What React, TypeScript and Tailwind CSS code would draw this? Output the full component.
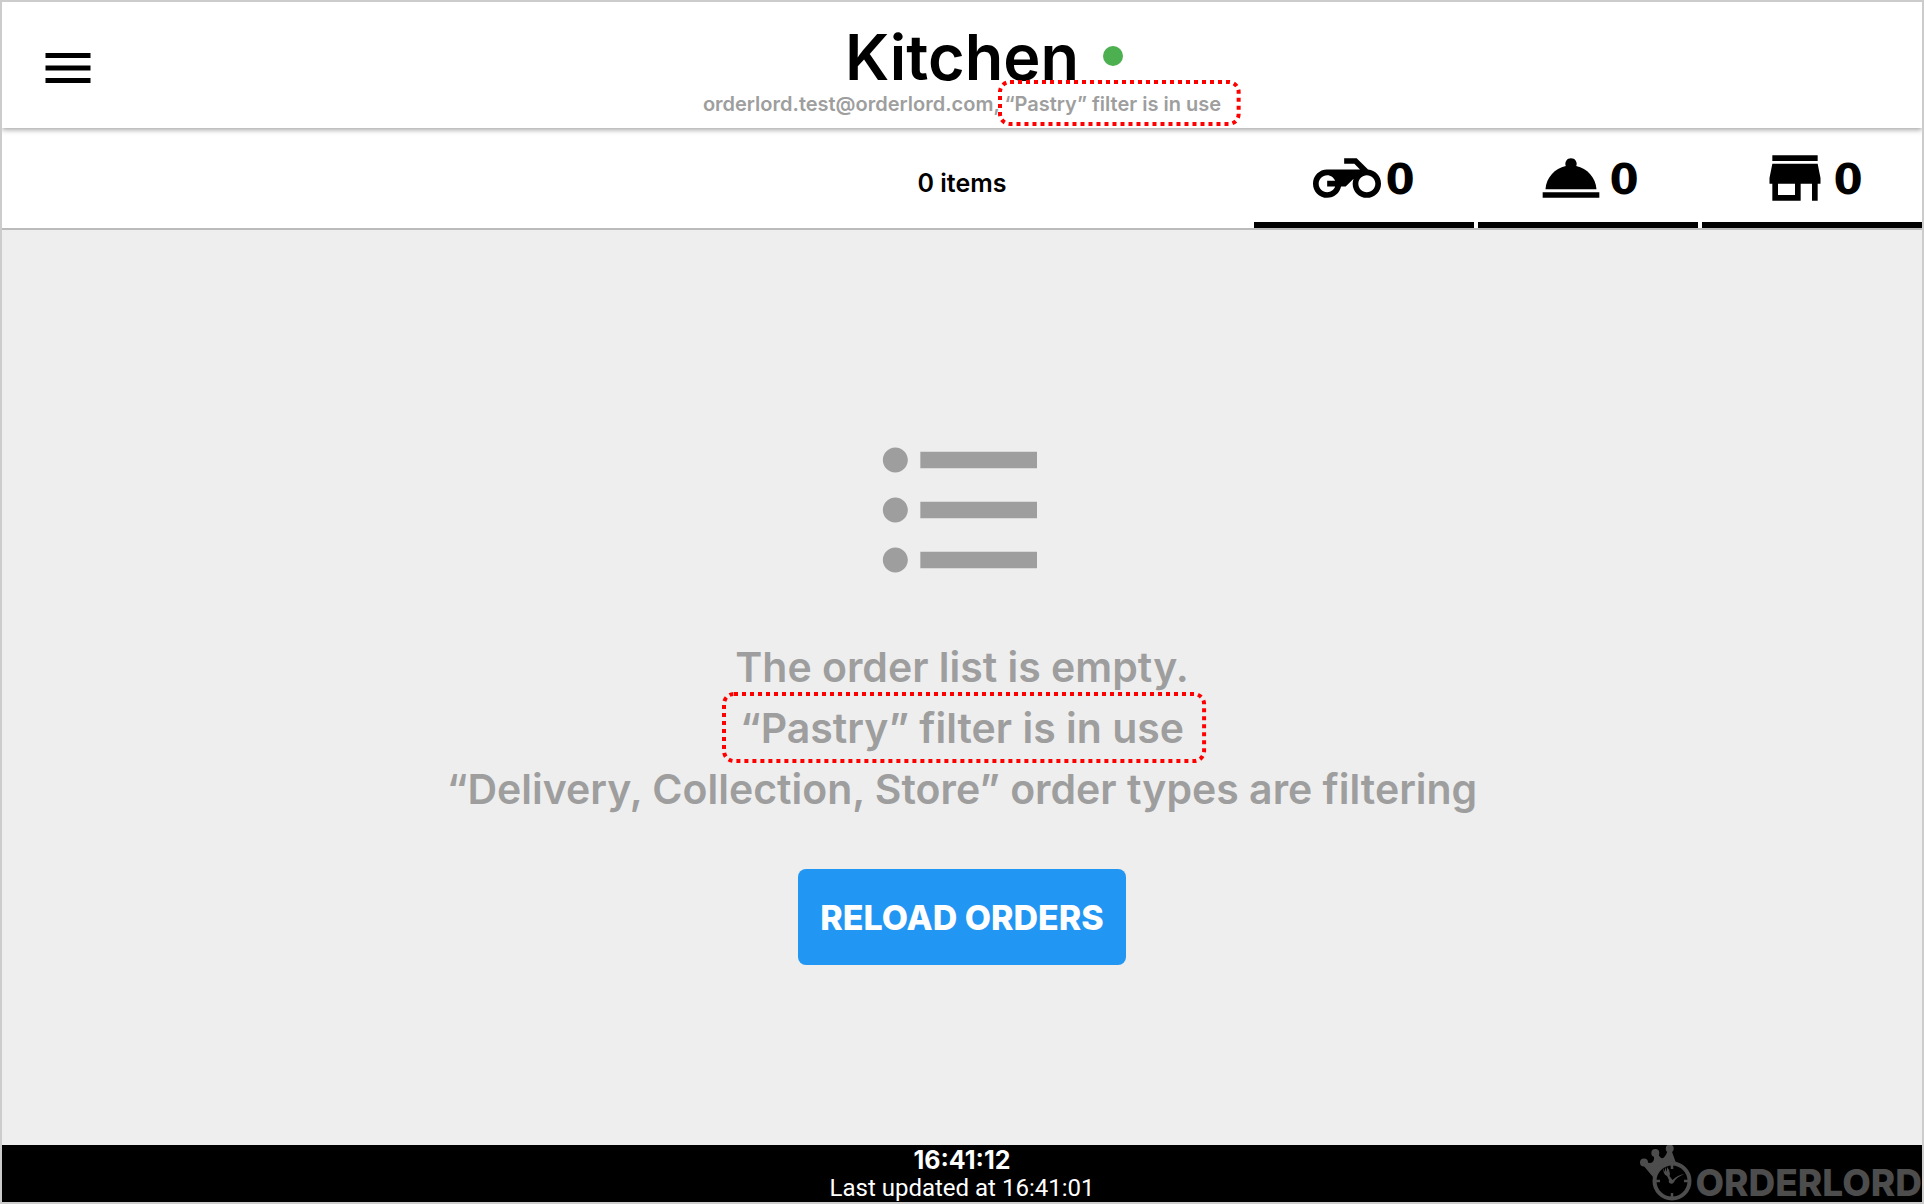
import type { ReactNode } from "react";
import {
  MdFormatListBulleted,
  MdMenu,
  MdRoomService,
} from "react-icons/md";

function DottedFrame({ className }: { className: string }) {
  return (
    <svg
      aria-hidden="true"
      className={`pointer-events-none absolute overflow-visible ${className}`}
    >
      <rect
        width="100%"
        height="100%"
        rx="10"
        fill="none"
        stroke="#ff0000"
        strokeWidth="4"
        strokeDasharray="4 4"
      />
    </svg>
  );
}

function MotorcycleIcon() {
  return (
    <svg viewBox="0 0 24 24" className="size-[68px]" fill="currentColor" aria-hidden="true">
      <path d="M19.44 9.03L15.41 5H11v2h3.59l2 2H5c-2.8 0-5 2.2-5 5s2.2 5 5 5c2.46 0 4.45-1.69 4.9-4h1.65l2.77-2.77c-.21.54-.32 1.14-.32 1.77 0 2.8 2.2 5 5 5s5-2.2 5-5c0-2.65-1.97-4.77-4.56-4.97zM7.82 15C7.4 16.15 6.28 17 5 17c-1.63 0-3-1.37-3-3s1.37-3 3-3c1.28 0 2.4.85 2.82 2H5v2h2.82zM19 17c-1.66 0-3-1.34-3-3s1.34-3 3-3 3 1.34 3 3-1.34 3-3 3z" />
    </svg>
  );
}

function StoreIcon() {
  return (
    <svg viewBox="0 0 24 24" className="size-[68px]" fill="currentColor" aria-hidden="true">
      <path d="M20 4H4v2h16V4zm1 10v-2l-1-5H4l-1 5v2h1v6h10v-6h4v6h2v-6h1zm-9 4H6v-4h6v4z" />
    </svg>
  );
}

function Tab({ label, count, children }: { label: string; count: number; children: ReactNode }) {
  return (
    <button
      type="button"
      aria-label={`${label}: ${count}`}
      className="flex w-[220px] items-center justify-center gap-1 border-b-6 border-black pt-1.5"
    >
      {children}
      <span className="pt-1 font-['DejaVu_Sans',sans-serif] text-[42px] leading-none font-bold">
        {count}
      </span>
    </button>
  );
}

function LogoMark() {
  return (
    <svg viewBox="0 0 56 57" className="h-[57px] w-14 shrink-0" fill="#4d4d4d" aria-hidden="true">
      <circle cx="5" cy="17.5" r="4" />
      <circle cx="16.3" cy="8" r="4" />
      <circle cx="30.7" cy="3.5" r="4" />
      <path d="M14 32 4 20l3-3q9 4 8-7l4-1q5 10 10-4l3-1 5 14q-17 0-23 14z" />
      <circle cx="33" cy="36" r="17.5" fill="#000" stroke="#4d4d4d" strokeWidth="4" />
      <path
        d="M33 19v5M33 48v5M16 36h5M45 36h5"
        stroke="#4d4d4d"
        strokeWidth="2.500"
      />
      <path d="M30.500 36 28 31q-3-1-3.500-5l-.5-3 2 4 0-5 2 5 0-5q3 3 3 7l-.5 2 3 4q5-5 12-6-8 3-10.500 8a2.600 2.600 0 1 1-5-2z" />
    </svg>
  );
}

export default function App() {
  return (
    <div className="flex h-screen flex-col overflow-hidden border-2 border-[#cccccc] bg-white font-['Inter',sans-serif] text-black">
      <header className="relative z-10 grid h-[126px] shrink-0 grid-cols-[1fr_auto_1fr] bg-white shadow-[0_2px_5px_rgba(0,0,0,0.35)]">
        <button type="button" aria-label="Menu" className="mt-9 ml-9 self-start justify-self-start">
          <MdMenu className="size-[60px]" />
        </button>
        <div className="flex flex-col items-center pt-[22px]">
          <div className="relative">
            <h1 className="text-[63px] leading-[66px] font-semibold">Kitchen</h1>
            <span
              role="status"
              aria-label="Online"
              className="absolute top-[22px] left-full ml-6 size-5 rounded-full bg-[#4caf50]"
            />
          </div>
          <p className="text-[20px] leading-7 font-semibold whitespace-nowrap text-[#9e9e9e]">
            orderlord.test@orderlord.com,{" "}
            <span className="relative inline-block">
              “Pastry” filter is in use
              <DottedFrame className="-top-2 -left-1 h-[42px] w-[calc(100%+22px)]" />
            </span>
          </p>
        </div>
      </header>

      <div className="grid h-[102px] shrink-0 grid-cols-[1fr_auto_1fr] border-b-2 border-[#bbbbbb]">
        <p className="col-start-2 self-center pt-2.5 text-[25px] leading-8 font-semibold">0 items</p>
        <nav aria-label="Order types" className="flex gap-1 justify-self-end">
          <Tab label="Delivery" count={0}>
            <MotorcycleIcon />
          </Tab>
          <Tab label="Collection" count={0}>
            <MdRoomService className="size-[68px]" />
          </Tab>
          <Tab label="Store" count={0}>
            <StoreIcon />
          </Tab>
        </nav>
      </div>

      <main className="flex flex-1 flex-col items-center justify-center bg-[#eeeeee] text-[#9e9e9e]">
        <MdFormatListBulleted className="size-[200px]" />
        <div className="mt-[27px] text-center text-[41px] leading-[61px] font-semibold">
          <p>The order list is empty.</p>
          <p>
            <span className="relative inline-block">
              “Pastry” filter is in use
              <DottedFrame className="-top-1 -left-4 h-[67px] w-[calc(100%+36px)]" />
            </span>
          </p>
          <p>“Delivery, Collection, Store” order types are filtering</p>
        </div>
        <button
          type="button"
          className="mt-[49px] h-24 w-[328px] rounded-lg bg-[#2196f3] text-[34px] font-extrabold whitespace-nowrap text-white"
        >
          RELOAD ORDERS
        </button>
      </main>

      <footer className="grid h-[57px] shrink-0 grid-cols-[1fr_auto_1fr] bg-black text-white">
        <div className="col-start-2 pt-px text-center">
          <p className="text-[25px] leading-7 font-bold">16:41:12</p>
          <p className="font-['Roboto',sans-serif] text-[24px] leading-7">Last updated at 16:41:01</p>
        </div>
        <div className="flex items-start justify-self-end">
          <LogoMark />
          <span className="pt-5 text-[37px] leading-9 font-extrabold text-[#4d4d4d]">ORDERLORD</span>
        </div>
      </footer>
    </div>
  );
}
